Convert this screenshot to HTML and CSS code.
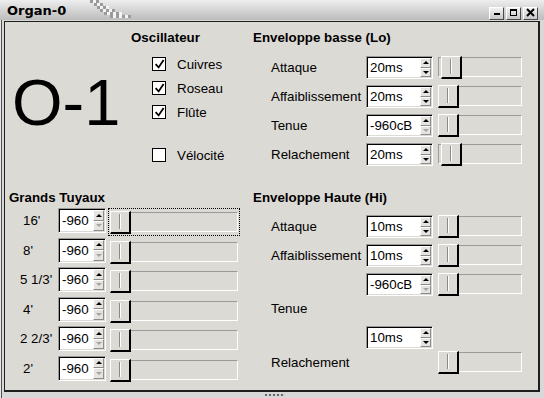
FILE: index.html
```html
<!DOCTYPE html>
<html lang="fr">
<head>
<meta charset="utf-8">
<title>Organ-0</title>
<link rel="stylesheet" href="styles.css">
</head>
<body>
<div class="window">
  <div class="titlebar">
    <span class="title">Organ-0</span>
    <svg class="dither" width="44" height="20" viewBox="0 0 44 20">
      <g fill="#9a9a9a">
        <rect x="2" y="0" width="3" height="3"/><rect x="8" y="0" width="3" height="3"/>
        <rect x="6" y="3" width="3" height="3"/><rect x="12" y="3" width="3" height="3"/>
        <rect x="9" y="6" width="3" height="3"/><rect x="15" y="6" width="3" height="3"/>
        <rect x="12" y="9" width="3" height="3"/><rect x="18" y="9" width="3" height="3"/><rect x="24" y="9" width="3" height="3"/>
        <rect x="16" y="12" width="3" height="3"/><rect x="22" y="12" width="3" height="3"/><rect x="28" y="12" width="3" height="3"/>
        <rect x="22" y="15" width="3" height="3"/><rect x="28" y="15" width="3" height="3"/><rect x="34" y="15" width="3" height="3"/><rect x="40" y="15" width="3" height="3"/>
      </g>
      <g fill="#f4f4f4">
        <rect x="5" y="0" width="3" height="3"/>
        <rect x="9" y="3" width="3" height="3"/>
        <rect x="12" y="6" width="3" height="3"/><rect x="18" y="6" width="3" height="3"/>
        <rect x="15" y="9" width="3" height="3"/><rect x="21" y="9" width="3" height="3"/>
        <rect x="19" y="12" width="3" height="3"/><rect x="25" y="12" width="3" height="3"/><rect x="31" y="12" width="3" height="3"/>
        <rect x="25" y="15" width="3" height="3"/><rect x="31" y="15" width="3" height="3"/><rect x="37" y="15" width="3" height="3"/>
      </g>
    </svg>
    <div class="wbtns">
      <span class="wbtn"><svg width="13" height="11" viewBox="0 0 13 11"><rect x="4" y="5" width="6" height="2" fill="#000"/></svg></span>
      <span class="wbtn"><svg width="13" height="11" viewBox="0 0 13 11"><rect x="3" y="1" width="7" height="2" fill="#000"/><rect x="3.5" y="1.5" width="6" height="6" fill="none" stroke="#000"/></svg></span>
      <span class="wbtn"><svg width="13" height="11" viewBox="0 0 13 11"><path d="M3 1 L10 8 M10 1 L3 8" stroke="#000" stroke-width="2" fill="none"/></svg></span>
    </div>
  </div>

  <div class="content">
    <div class="big">O-1</div>

    <div class="osc">
      <div class="head">Oscillateur</div>
      <div class="cbs">
        <div class="cb"><span class="box"><svg width="12" height="12" viewBox="0 0 12 12"><polyline points="2.6,6.2 5.6,9.4 10.6,2" fill="none" stroke="#000" stroke-width="1.8"/></svg></span><span>Cuivres</span></div>
        <div class="cb"><span class="box"><svg width="12" height="12" viewBox="0 0 12 12"><polyline points="2.6,6.2 5.6,9.4 10.6,2" fill="none" stroke="#000" stroke-width="1.8"/></svg></span><span>Roseau</span></div>
        <div class="cb"><span class="box"><svg width="12" height="12" viewBox="0 0 12 12"><polyline points="2.6,6.2 5.6,9.4 10.6,2" fill="none" stroke="#000" stroke-width="1.8"/></svg></span><span>Flûte</span></div>
        <div class="cb cb-gap"><span class="box"></span><span>Vélocité</span></div>
      </div>
    </div>

    <div class="env lo">
      <div class="head">Enveloppe basse (Lo)</div>
      <div class="erow first">
        <span class="elabel">Attaque</span>
        <div class="spin"><span class="val">20ms</span><span class="arrows"><span class="arr up"></span><span class="arr down"></span></span></div>
        <div class="slider"><span class="thumb off3"></span></div>
      </div>
      <div class="erow">
        <span class="elabel">Affaiblissement</span>
        <div class="spin"><span class="val">20ms</span><span class="arrows"><span class="arr up"></span><span class="arr down"></span></span></div>
        <div class="slider"><span class="thumb"></span></div>
      </div>
      <div class="erow">
        <span class="elabel">Tenue</span>
        <div class="spin"><span class="val">-960cB</span><span class="arrows"><span class="arr up"></span><span class="arr down dis"></span></span></div>
        <div class="slider"><span class="thumb"></span></div>
      </div>
      <div class="erow">
        <span class="elabel">Relachement</span>
        <div class="spin"><span class="val">20ms</span><span class="arrows"><span class="arr up"></span><span class="arr down"></span></span></div>
        <div class="slider"><span class="thumb off3"></span></div>
      </div>
    </div>

    <div class="pipes">
      <div class="head">Grands Tuyaux</div>
      <div class="prow first">
        <span class="plabel">16'</span>
        <div class="spin narrow"><span class="val">-960</span><span class="arrows"><span class="arr up"></span><span class="arr down dis"></span></span></div>
        <div class="focus"><div class="slider wide"><span class="thumb"></span></div></div>
      </div>
      <div class="prow">
        <span class="plabel">8'</span>
        <div class="spin narrow"><span class="val">-960</span><span class="arrows"><span class="arr up"></span><span class="arr down dis"></span></span></div>
        <div class="slider wide"><span class="thumb"></span></div>
      </div>
      <div class="prow">
        <span class="plabel long">5 1/3'</span>
        <div class="spin narrow"><span class="val">-960</span><span class="arrows"><span class="arr up"></span><span class="arr down dis"></span></span></div>
        <div class="slider wide"><span class="thumb"></span></div>
      </div>
      <div class="prow">
        <span class="plabel">4'</span>
        <div class="spin narrow"><span class="val">-960</span><span class="arrows"><span class="arr up"></span><span class="arr down dis"></span></span></div>
        <div class="slider wide"><span class="thumb"></span></div>
      </div>
      <div class="prow">
        <span class="plabel long">2 2/3'</span>
        <div class="spin narrow"><span class="val">-960</span><span class="arrows"><span class="arr up"></span><span class="arr down dis"></span></span></div>
        <div class="slider wide"><span class="thumb"></span></div>
      </div>
      <div class="prow">
        <span class="plabel">2'</span>
        <div class="spin narrow"><span class="val">-960</span><span class="arrows"><span class="arr up"></span><span class="arr down dis"></span></span></div>
        <div class="slider wide"><span class="thumb"></span></div>
      </div>
    </div>

    <div class="env hi">
      <div class="head">Enveloppe Haute (Hi)</div>
      <div class="erow first">
        <span class="elabel">Attaque</span>
        <div class="spin"><span class="val">10ms</span><span class="arrows"><span class="arr up"></span><span class="arr down"></span></span></div>
        <div class="slider"><span class="thumb"></span></div>
      </div>
      <div class="erow">
        <span class="elabel">Affaiblissement</span>
        <div class="spin"><span class="val">10ms</span><span class="arrows"><span class="arr up"></span><span class="arr down"></span></span></div>
        <div class="slider"><span class="thumb"></span></div>
      </div>
      <div class="erow">
        <span class="elabel"></span>
        <div class="spin"><span class="val">-960cB</span><span class="arrows"><span class="arr up"></span><span class="arr down dis"></span></span></div>
        <div class="slider"><span class="thumb"></span></div>
      </div>
      <div class="tenue">Tenue</div>
      <div class="erow after-tenue">
        <span class="elabel"></span>
        <div class="spin"><span class="val">10ms</span><span class="arrows"><span class="arr up"></span><span class="arr down"></span></span></div>
      </div>
      <div class="erow relach">
        <span class="elabel">Relachement</span>
        <span class="spacer"></span>
        <div class="slider"><span class="thumb"></span></div>
      </div>
    </div>
  </div>
  <div class="grip"></div>
</div>
</body>
</html>
```

FILE: styles.css
```css
* { box-sizing: border-box; }
html, body { margin: 0; padding: 0; }
body {
  width: 544px;
  height: 398px;
  overflow: hidden;
  background: #d8d8d8;
  font-family: "Liberation Sans", Arial, sans-serif;
  font-size: 13.33px;
  color: #000;
}
.window {
  width: 544px;
  height: 398px;
  display: flex;
  flex-direction: column;
  background: #d8d8d8;
  box-shadow: inset 1px 0 0 #e8e8e8, inset 2px 0 0 #505050;
}
.titlebar {
  height: 20px;
  flex: none;
  display: flex;
  align-items: flex-start;
  background: linear-gradient(#eeeeee, #bcbcbc);
}
.title {
  width: 88px;
  flex: none;
  padding: 1px 0 0 7px;
  font-family: "DejaVu Sans", sans-serif;
  font-weight: bold;
  font-size: 13px;
  line-height: 19px;
  white-space: nowrap;
}
.dither { flex: none; display: block; }
.wbtns {
  margin: 7px 6px 0 auto;
  display: flex;
  gap: 2px;
}
.wbtn {
  display: block;
  width: 15px;
  height: 13px;
  border: 1px solid;
  border-color: #ffffff #4a4a4a #4a4a4a #ffffff;
  background: linear-gradient(#f2f2f2, #c6c6c6);
}
.wbtn svg { display: block; }

.content {
  flex: none;
  height: 371px;
  margin: 1px 4px 0 4px;
  border: 1px solid #1e1e1e;
  border-right-width: 2px;
  border-bottom-width: 2px;
  background: #dcdad5;
  display: grid;
  grid-template-columns: 126px 122px 1fr;
  grid-template-rows: 163px 1fr;
}
.big {
  padding: 48px 0 0 7px;
  font-size: 65px;
  line-height: 65px;
  white-space: nowrap;
}
.head {
  font-weight: bold;
  line-height: 16px;
  white-space: nowrap;
}
.osc { padding: 8px 0 0 0; }
.cbs { margin-top: 6px; padding-left: 21px; }
.cb {
  display: flex;
  align-items: center;
  height: 24px;
  gap: 11px;
  white-space: nowrap;
}
.cb-gap { margin-top: 19px; }
.box {
  display: block;
  flex: none;
  width: 14px;
  height: 14px;
  border: 1px solid #000;
  background: #fff;
}
.box svg { display: block; }

.env { padding-top: 8px; }
.env.hi { padding-top: 5px; }
.erow {
  display: flex;
  align-items: flex-start;
  height: 23px;
  padding-left: 18px;
  margin-top: 6px;
}
.lo .erow.first { margin-top: 10px; }
.hi .erow.first { margin-top: 9px; }
.erow.after-tenue { margin-top: 9px; }
.erow.relach { margin-top: 2px; }
.elabel {
  flex: none;
  width: 95px;
  line-height: 23px;
  white-space: nowrap;
}
.tenue {
  margin-top: 5px;
  padding-left: 18px;
  height: 16px;
  line-height: 16px;
}
.spacer { flex: none; width: 67px; }

.spin {
  flex: none;
  display: flex;
  width: 67px;
  height: 23px;
  padding: 1px;
  border: 1px solid;
  border-color: #9a9a9a #ffffff #ffffff #9a9a9a;
  background: #fff;
  box-shadow: inset 1px 1px 0 #000, inset -1px -1px 0 #dcdad5;
}
.spin.narrow { width: 48px; height: 25px; }
.val {
  flex: 1;
  min-width: 0;
  padding-left: 2px;
  line-height: 19px;
  white-space: nowrap;
  overflow: hidden;
}
.narrow .val { line-height: 21px; }
.arrows {
  flex: none;
  width: 11px;
  display: flex;
  flex-direction: column;
}
.arr {
  flex: 1;
  display: flex;
  align-items: center;
  justify-content: center;
  background: #e6e4e0;
  border: 1px solid;
  border-color: #ffffff #8c8c8c #8c8c8c #ffffff;
}
.arr.up::before {
  content: "";
  border-left: 3px solid transparent;
  border-right: 3px solid transparent;
  border-bottom: 3px solid #000;
}
.arr.down::before {
  content: "";
  border-left: 3px solid transparent;
  border-right: 3px solid transparent;
  border-top: 3px solid #000;
}
.arr.down.dis::before { border-top-color: #a4a4a4; }

.slider {
  flex: none;
  display: flex;
  align-items: flex-start;
  width: 84px;
  height: 20px;
  margin: 1px 0 0 5px;
  border: 1px solid;
  border-color: #9a9a9a #ffffff #ffffff #9a9a9a;
}
.slider.wide { width: 128px; margin: 4px 0 0 4px; }
.thumb {
  flex: none;
  display: flex;
  justify-content: center;
  width: 21px;
  height: 23px;
  margin: -2px 0 0 -1px;
  padding-top: 2px;
  background: #dcdad5;
  border: 1px solid;
  border-color: #ffffff #000000 #000000 #ffffff;
  border-right-width: 2px;
  border-bottom-width: 2px;
}
.thumb.off3 { margin-left: 2px; }
.thumb::after {
  content: "";
  width: 2px;
  height: 15px;
  background: linear-gradient(90deg, #8a8a8a 50%, #ffffff 50%);
}

.pipes {
  grid-column: 1 / 3;
  padding: 5px 0 0 4px;
}
.prow {
  display: flex;
  align-items: flex-start;
  height: 25px;
  margin-top: 4.5px;
}
.prow.first { margin-top: 2px; }
.plabel {
  flex: none;
  width: 49px;
  padding: 1px 0 0 14px;
  line-height: 24px;
  white-space: nowrap;
}
.plabel.long { padding-left: 11px; }
.focus {
  flex: none;
  width: 132px;
  height: 28px;
  margin-left: 2px;
  padding: 1px;
  border: 1px dotted #000;
}
.focus .slider.wide { margin: 2px 0 0 0; }

.grip {
  width: 20px;
  height: 2px;
  margin: 2px 0 0 265px;
  background: repeating-linear-gradient(90deg, #6a6a6a 0 2px, #d0d0d0 2px 4px);
}
```
